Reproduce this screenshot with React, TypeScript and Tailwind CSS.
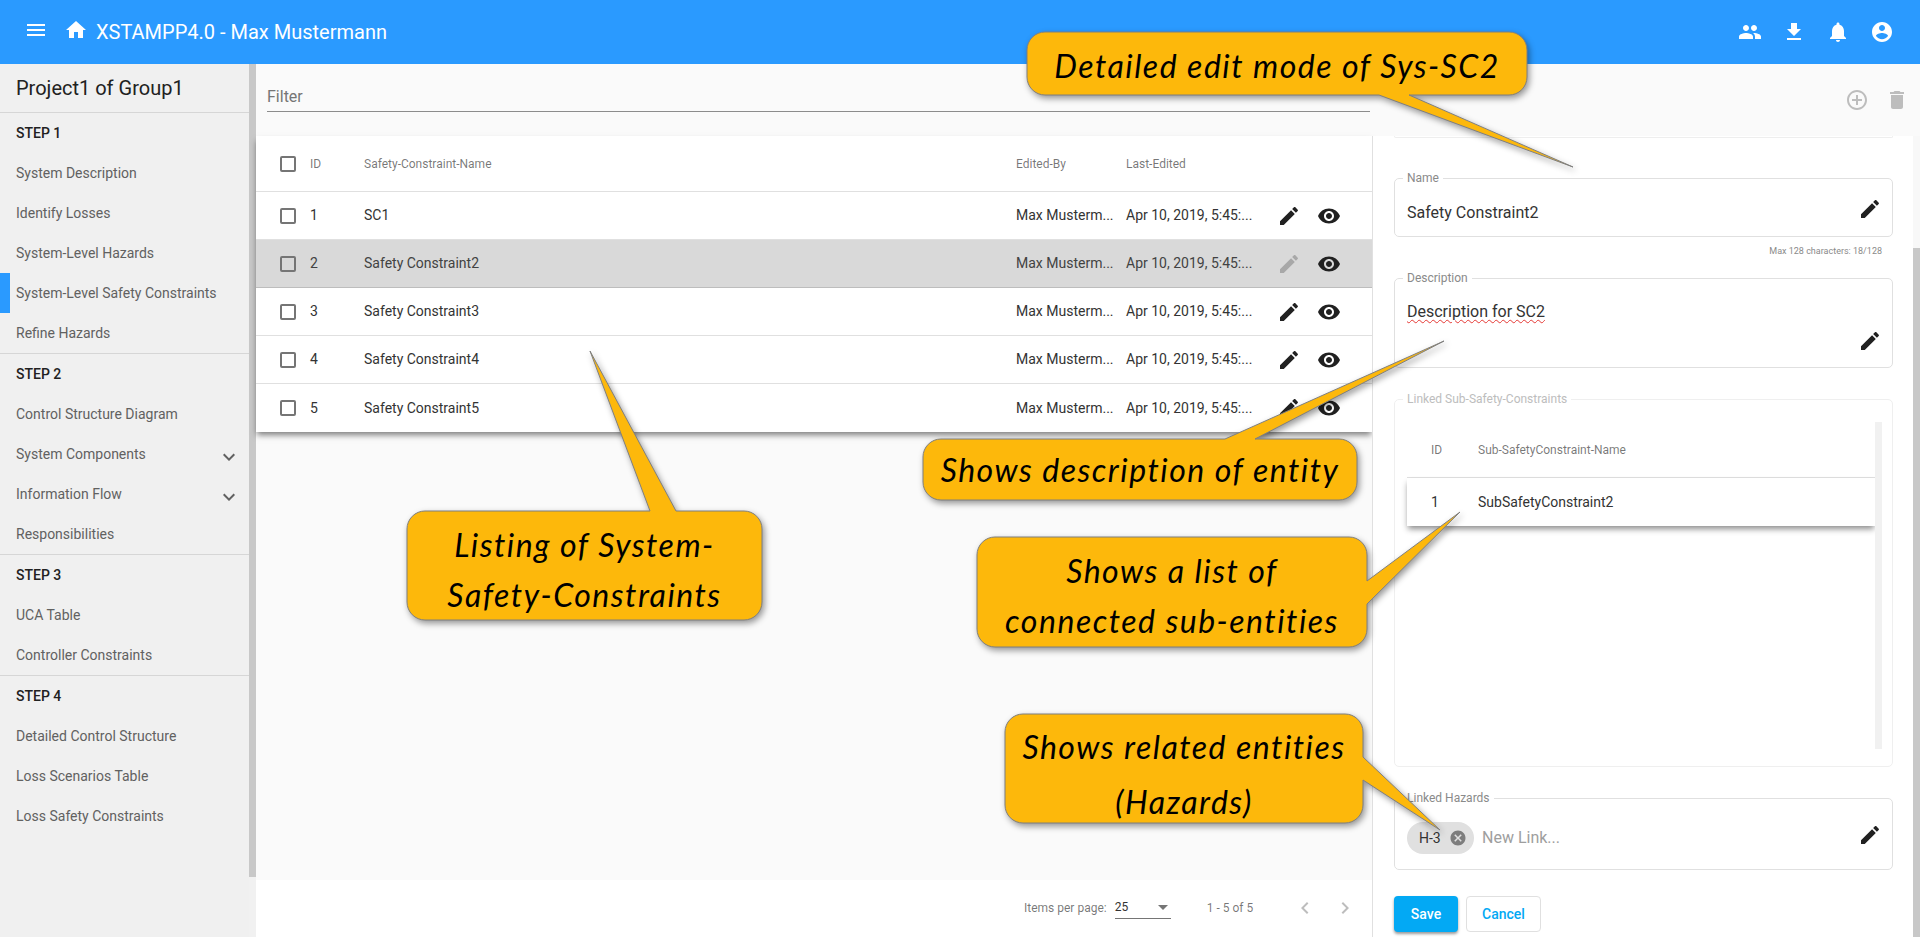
import React from "react";

const Icon = ({ d, className }: { d: string; className?: string }) => (
  <svg viewBox="0 0 24 24" className={className} fill="currentColor">
    <path d={d} />
  </svg>
);

const icons = {
  menu: "M3 18h18v-2H3v2zm0-5h18v-2H3v2zm0-7v2h18V6H3z",
  home: "M10 20v-6h4v6h5v-8h3L12 3 2 12h3v8z",
  people:
    "M16 11c1.66 0 2.99-1.34 2.99-3S17.66 5 16 5c-1.66 0-3 1.34-3 3s1.34 3 3 3zm-8 0c1.66 0 2.99-1.34 2.99-3S9.66 5 8 5C6.34 5 5 6.34 5 8s1.34 3 3 3zm0 2c-2.33 0-7 1.17-7 3.5V19h14v-2.5c0-2.33-4.67-3.5-7-3.5zm8 0c-.29 0-.62.02-.97.05 1.16.84 1.97 1.97 1.97 3.45V19h6v-2.5c0-2.33-4.67-3.5-7-3.5z",
  download: "M19 9h-4V3H9v6H5l7 7 7-7zM5 18v2h14v-2H5z",
  bell: "M12 22c1.1 0 2-.9 2-2h-4c0 1.1.89 2 2 2zm6-6v-5c0-3.07-1.64-5.64-4.5-6.32V4c0-.83-.67-1.5-1.5-1.5s-1.5.67-1.5 1.5v.68C7.63 5.36 6 7.92 6 11v5l-2 2v1h16v-1l-2-2z",
  account:
    "M12 2C6.48 2 2 6.48 2 12s4.48 10 10 10 10-4.48 10-10S17.52 2 12 2zm0 3c1.66 0 3 1.34 3 3s-1.34 3-3 3-3-1.34-3-3 1.34-3 3-3zm0 14.2c-2.5 0-4.71-1.28-6-3.22.03-1.99 4-3.08 6-3.08 1.99 0 5.97 1.09 6 3.08-1.29 1.94-3.5 3.22-6 3.22z",
  edit: "M3 17.25V21h3.75L17.81 9.94l-3.75-3.75L3 17.25zM20.71 7.04c.39-.39.39-1.02 0-1.41l-2.34-2.34c-.39-.39-1.02-.39-1.41 0l-1.83 1.83 3.75 3.75 1.83-1.83z",
  eye: "M12 4.5C7 4.5 2.73 7.61 1 12c1.73 4.39 6 7.5 11 7.5s9.27-3.11 11-7.5c-1.73-4.39-6-7.5-11-7.5zM12 17c-2.76 0-5-2.24-5-5s2.24-5 5-5 5 2.24 5 5-2.24 5-5 5zm0-8c-1.66 0-3 1.34-3 3s1.34 3 3 3 3-1.34 3-3-1.34-3-3-3z",
  add: "M13 7h-2v4H7v2h4v4h2v-4h4v-2h-4V7zm-1-5C6.48 2 2 6.48 2 12s4.48 10 10 10 10-4.48 10-10S17.52 2 12 2zm0 18c-4.41 0-8-3.59-8-8s3.59-8 8-8 8 3.59 8 8-3.59 8-8 8z",
  trash: "M6 19c0 1.1.9 2 2 2h8c1.1 0 2-.9 2-2V7H6v12zM19 4h-3.5l-1-1h-5l-1 1H5v2h14V4z",
  expand: "M16.59 8.59L12 13.17 7.41 8.59 6 10l6 6 6-6z",
  cancel:
    "M12 2C6.47 2 2 6.47 2 12s4.47 10 10 10 10-4.47 10-10S17.53 2 12 2zm5 13.59L15.59 17 12 13.41 8.41 17 7 15.59 10.59 12 7 8.41 8.41 7 12 10.59 15.59 7 17 8.41 13.41 12 17 15.59z",
  left: "M15.41 7.41L14 6l-6 6 6 6 1.41-1.41L10.83 12z",
  right: "M10 6L8.59 7.41 13.17 12l-4.58 4.59L10 18l6-6z",
};

const steps = [
  {
    title: "STEP 1",
    items: ["System Description", "Identify Losses", "System-Level Hazards", "System-Level Safety Constraints", "Refine Hazards"],
  },
  {
    title: "STEP 2",
    items: ["Control Structure Diagram", "System Components", "Information Flow", "Responsibilities"],
  },
  { title: "STEP 3", items: ["UCA Table", "Controller Constraints"] },
  { title: "STEP 4", items: ["Detailed Control Structure", "Loss Scenarios Table", "Loss Safety Constraints"] },
];

const rows = [
  { id: 1, name: "SC1" },
  { id: 2, name: "Safety Constraint2" },
  { id: 3, name: "Safety Constraint3" },
  { id: 4, name: "Safety Constraint4" },
  { id: 5, name: "Safety Constraint5" },
];

const Checkbox = () => <div className="h-4 w-4 shrink-0 rounded-[2px] border-2 border-[#757575]" />;

const Sidebar = () => (
  <aside className="flex w-[256px] shrink-0">
    <div className="w-[249px] bg-[#f0f0f0]">
      <div className="flex h-[49px] items-center border-b border-[#d6d6d6] pl-4 text-[20px] text-[#212121]">
        Project1 of Group1
      </div>
      {steps.map((step) => (
        <div key={step.title} className="border-b border-[#d6d6d6] last:border-b-0">
          <div className="flex h-10 items-center pl-4 text-sm font-medium text-[#212121]">{step.title}</div>
          {step.items.map((item) => (
            <div key={item} className="relative flex h-10 items-center justify-between pl-4 pr-[8px] text-sm text-[#616161]">
              {item === "System-Level Safety Constraints" && (
                <div className="absolute left-0 top-0 h-10 w-[10px] bg-[#2a9aff]" />
              )}
              <span>{item}</span>
              {(item === "System Components" || item === "Information Flow") && (
                <Icon d={icons.expand} className="mt-[6px] h-6 w-6 text-[#616161]" />
              )}
            </div>
          ))}
        </div>
      ))}
    </div>
    <div className="flex w-[7px] flex-col bg-[#f1f1f1]">
      <div className="h-[813px] bg-[#c8c8c8]" />
    </div>
  </aside>
);

const Table = () => (
  <div className="bg-white text-[14px] shadow-[0_4px_6px_-1px_rgba(0,0,0,0.5)]">
    <div className="flex h-[56px] items-center border-b border-[#e0e0e0] pl-6 text-[12px] text-[#0000008a]">
      <Checkbox />
      <div className="ml-[14px] w-[54px]">ID</div>
      <div className="flex-1">Safety-Constraint-Name</div>
      <div className="w-[110px]">Edited-By</div>
      <div className="w-[246px]">Last-Edited</div>
    </div>
    {rows.map((row) => {
      const selected = row.id === 2;
      return (
        <div
          key={row.id}
          className={
            selected
              ? "flex h-[48px] items-center border-b border-[#bdbdbd] bg-[#d9d9d9] pl-6 text-[#424242]"
              : "flex h-[48px] items-center border-b border-[#e0e0e0] pl-6 text-[#333333] last:border-b-0"
          }
        >
          <Checkbox />
          <div className="ml-[14px] w-[54px]">{row.id}</div>
          <div className="flex-1">{row.name}</div>
          <div className="w-[110px]">Max Musterm...</div>
          <div className="w-[151px]">Apr 10, 2019, 5:45:...</div>
          <Icon d={icons.edit} className={selected ? "h-6 w-6 text-[#a8a8a8]" : "h-6 w-6 text-[#212121]"} />
          <Icon d={icons.eye} className="ml-4 mr-[31px] h-6 w-6 text-[#212121]" />
        </div>
      );
    })}
  </div>
);

const Field = ({ label, faded, className, children }: { label: string; faded?: boolean; className: string; children: React.ReactNode }) => (
  <fieldset className={`rounded-[5px] border ${faded ? "border-[#efefef]" : "border-[#e0e0e0]"} ${className}`}>
    <legend className={`-ml-1 px-1 text-[12px] leading-[14px] ${faded ? "text-[#bdbdbd]" : "text-[#8a8a8a]"}`}>{label}</legend>
    {children}
  </fieldset>
);

const DetailPanel = () => (
  <div className="flex w-[548px] shrink-0 border-l border-[#e0e0e0] bg-white">
    <div className="w-[541px] pl-[21px] pr-[20px]">
      <div className="h-[2px] rounded-b-[5px] border border-t-0 border-[#eeeeee]" />
      <Field label="Name" className="mt-[33px] flex h-[66px] items-center justify-between pl-3 pr-[10px]">
        <span className="mt-1 text-[16px] text-[#333333]">Safety Constraint2</span>
        <Icon d={icons.edit} className="mb-1 h-6 w-6 text-[#212121]" />
      </Field>
      <div className="mt-[7px] pr-[11px] text-right text-[9px] leading-[14px] text-[#8a8a8a]">Max 128 characters: 18/128</div>
      <Field label="Description" className="mt-[13px] h-[97px] pl-3 pr-[10px]">
        <div className="pt-[15px] text-[16px] text-[#333333]">
          <span className="underline decoration-[#e53935] decoration-wavy decoration-1 underline-offset-2">Description for SC2</span>
        </div>
        <div className="mt-[5px] flex justify-end">
          <Icon d={icons.edit} className="h-6 w-6 text-[#212121]" />
        </div>
      </Field>
      <Field label="Linked Sub-Safety-Constraints" faded className="mt-[24px] flex h-[375px] pl-3 pr-[10px]">
        <div className="mt-4 h-[327px] flex-1">
          <div className="flex h-[56px] items-center border-b border-[#e0e0e0] pl-6 text-[12px] text-[#0000008a]">
            <div className="w-[47px]">ID</div>
            <div>Sub-SafetyConstraint-Name</div>
          </div>
          <div className="flex h-[48px] items-center pl-6 text-[14px] text-[#333333] shadow-[0_4px_6px_-1px_rgba(0,0,0,0.45)]">
            <div className="w-[47px]">1</div>
            <div>SubSafetyConstraint2</div>
          </div>
        </div>
        <div className="mt-4 h-[327px] w-[7px] bg-[#f1f1f1]" />
      </Field>
      <Field label="Linked Hazards" className="mt-[24px] flex h-[79px] items-center justify-between pl-3 pr-[10px] pt-[2px]">
        <div className="flex items-center">
          <div className="flex h-8 w-[67px] items-center justify-between rounded-full bg-[#e0e0e0] pl-3 pr-[7px] text-[14px] text-[#333333]">
            H-3
            <Icon d={icons.cancel} className="h-[18px] w-[18px] text-[#7d7d7d]" />
          </div>
          <span className="ml-2 text-[16px] text-[#9e9e9e]">New Link...</span>
        </div>
        <Icon d={icons.edit} className="mb-[7px] h-6 w-6 text-[#212121]" />
      </Field>
      <div className="mt-[26px] flex gap-2">
        <div className="flex h-9 w-[64px] items-center justify-center rounded-[4px] bg-[#03a9f4] text-[14px] font-medium text-white shadow-[0_2px_3px_rgba(0,0,0,0.4)]">
          Save
        </div>
        <div className="flex h-9 w-[75px] items-center justify-center rounded-[4px] border border-[#e0e0e0] text-[14px] font-medium text-[#03a9f4]">
          Cancel
        </div>
      </div>
    </div>
    <div className="flex w-[7px] flex-col bg-[#f8f8f8]">
      <div className="mt-[112px] flex-1 bg-[#c8c8c8]" />
    </div>
  </div>
);

const Pagination = () => (
  <div className="flex h-[57px] items-center bg-white pb-[2px] pl-[768px] text-[12px] text-[#0000008a]">
    <span>Items per page:</span>
    <div className="ml-[8px] flex h-[22px] w-[56px] items-center justify-between border-b border-[#757575] pr-[3px] text-[#333333]">
      25
      <div className="h-0 w-0 border-x-[5px] border-t-[5px] border-x-transparent border-t-[#757575]" />
    </div>
    <span className="ml-9">1 - 5 of 5</span>
    <Icon d={icons.left} className="ml-[40px] h-6 w-6 text-[#bdbdbd]" />
    <Icon d={icons.right} className="ml-4 h-6 w-6 text-[#bdbdbd]" />
  </div>
);

const calloutPaths = [
  "M1045 32H1509A18 18 0 0 1 1527 50V77A18 18 0 0 1 1509 95H1409L1573 167L1379 95H1045A18 18 0 0 1 1027 77V50A18 18 0 0 1 1045 32Z",
  "M425 511H650L590 351L676 511H744A18 18 0 0 1 762 529V602A18 18 0 0 1 744 620H425A18 18 0 0 1 407 602V529A18 18 0 0 1 425 511Z",
  "M941 439H1225L1444 341L1255 439H1339A18 18 0 0 1 1357 457V482A18 18 0 0 1 1339 500H941A18 18 0 0 1 923 482V457A18 18 0 0 1 941 439Z",
  "M995 537H1349A18 18 0 0 1 1367 555V581L1460 512L1367 604V629A18 18 0 0 1 1349 647H995A18 18 0 0 1 977 629V555A18 18 0 0 1 995 537Z",
  "M1023 714H1345A18 18 0 0 1 1363 732V757L1440 830L1363 780V805A18 18 0 0 1 1345 823H1023A18 18 0 0 1 1005 805V732A18 18 0 0 1 1023 714Z",
];

const calloutFont = "absolute text-center font-['Lato',sans-serif] text-[32px] italic leading-[50px] tracking-[1.5px] text-black";

const Callouts = () => (
  <>
    <svg viewBox="0 0 1920 937" className="pointer-events-none absolute left-0 top-0 h-[937px] w-[1920px] drop-shadow-[2px_3px_3px_rgba(0,0,0,0.4)]">
      {calloutPaths.map((d) => (
        <path key={d} d={d} fill="#fdb80b" stroke="#7f7f7f" strokeWidth="1" />
      ))}
    </svg>
    <div className={`${calloutFont} left-[1027px] top-[41px] w-[500px]`}>Detailed edit mode of Sys-SC2</div>
    <div className={`${calloutFont} left-[407px] top-[520px] w-[355px]`}>
      Listing of System-
      <br />
      Safety-Constraints
    </div>
    <div className={`${calloutFont} left-[923px] top-[445px] w-[434px]`}>Shows description of entity</div>
    <div className={`${calloutFont} left-[977px] top-[546px] w-[390px]`}>
      Shows a list of
      <br />
      connected sub-entities
    </div>
    <div className={`${calloutFont} left-[1005px] top-[719px] w-[358px] leading-[55px]`}>
      Shows related entities
      <br />
      (Hazards)
    </div>
  </>
);

export default function App() {
  return (
    <div className="relative flex h-[937px] w-[1920px] flex-col overflow-hidden bg-[#fafafa] font-['Roboto',sans-serif]">
      <header className="flex h-16 shrink-0 items-center bg-[#2a9aff] text-white">
        <Icon d={icons.menu} className="mb-1 ml-6 h-6 w-6" />
        <Icon d={icons.home} className="mb-1 ml-[16px] h-6 w-6" />
        <span className="ml-2 text-[20px]">XSTAMPP4.0 - Max Mustermann</span>
        <div className="ml-auto mr-[26px] flex gap-5">
          <Icon d={icons.people} className="h-6 w-6" />
          <Icon d={icons.download} className="h-6 w-6" />
          <Icon d={icons.bell} className="h-6 w-6" />
          <Icon d={icons.account} className="h-6 w-6" />
        </div>
      </header>
      <div className="flex min-h-0 flex-1">
        <Sidebar />
        <div className="flex min-w-0 flex-1 flex-col">
          <div className="flex h-[72px] shrink-0 items-start">
            <div className="ml-[11px] mt-[20px] h-[28px] w-[1103px] border-b border-[#8c8c8c] pt-[1px] text-[16px] leading-[24px] text-[#757575]">
              Filter
            </div>
            <Icon d={icons.add} className="ml-[475px] mt-[24px] h-6 w-6 text-[#bdbdbd]" />
            <Icon d={icons.trash} className="ml-[16px] mt-[24px] h-6 w-6 text-[#bdbdbd]" />
          </div>
          <div className="flex min-h-0 flex-1">
            <div className="flex min-w-0 flex-1 flex-col">
              <div className="flex-1">
                <Table />
              </div>
              <Pagination />
            </div>
            <DetailPanel />
          </div>
        </div>
      </div>
      <Callouts />
    </div>
  );
}
